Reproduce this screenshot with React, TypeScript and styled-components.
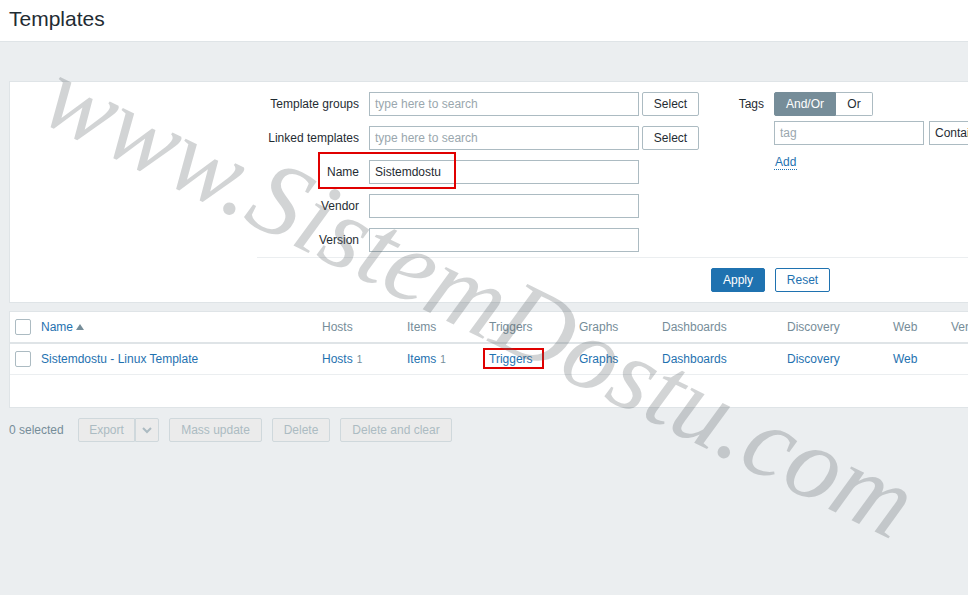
import React from "react";
import styled, { createGlobalStyle } from "styled-components";

const Global = createGlobalStyle`
  html, body { margin: 0; padding: 0; background: #ebeef0; }
  body { font: 12px/14px "Liberation Sans", Arial, sans-serif; color: #1f2c33; }
  #root { width: 968px; height: 595px; overflow: hidden; }
  * { box-sizing: border-box; }
`;

const Page = styled.div`
  position: relative;
  width: 968px;
  height: 595px;
  overflow: hidden;
  background: #ebeef0;
`;
const Header = styled.header`
  height: 42px;
  background: #fff;
  border-bottom: 1px solid #dfe4e7;
  padding: 7px 0 0 9px;
`;
const Title = styled.h1`
  margin: 0;
  font-size: 21px;
  line-height: 24px;
  font-weight: 400;
  color: #1f2c33;
`;
const Content = styled.main`
  padding: 39px 0 0 9px;
  width: 1200px;
`;
const FilterPanel = styled.section`
  height: 222px;
  background: #fff;
  border: 1px solid #dfe4e7;
  border-right: 0;
  padding-top: 10px;
`;
const FilterColumns = styled.div`
  display: flex;
  height: 165px;
`;
const LeftColumn = styled.div`
  display: flex;
  flex-direction: column;
  gap: 10px;
  width: 720px;
`;
const TagsColumn = styled.div`
  display: grid;
  grid-template-columns: 34px auto;
  column-gap: 10px;
  align-content: start;
  height: 100%;
`;
const FieldRow = styled.div`
  position: relative;
  display: flex;
  align-items: center;
  height: 24px;
`;
const Label = styled.label`
  width: 359px;
  padding-right: 10px;
  text-align: right;
  color: #1f2c33;
`;
const TextInput = styled.div<{ $placeholder?: boolean }>`
  width: 270px;
  height: 24px;
  line-height: 22px;
  padding: 0 5px;
  background: #fff;
  border: 1px solid #acbbc2;
  color: ${(p) => (p.$placeholder ? "#9aa7ae" : "#1f2c33")};
`;
const SelectButton = styled.button`
  width: 57px;
  height: 24px;
  margin-left: 3px;
  padding: 0;
  font: inherit;
  color: #1f2c33;
  background: #fff;
  border: 1px solid #acbbc2;
  border-radius: 2px;
`;
const TagsLabel = styled.div`
  padding-top: 5px;
  height: 24px;
  text-align: right;
  color: #1f2c33;
`;
const Segmented = styled.div`
  display: flex;
  width: 99px;
  height: 24px;
`;
const Segment = styled.div<{ $active?: boolean }>`
  display: flex;
  align-items: center;
  justify-content: center;
  height: 24px;
  flex: ${(p) => (p.$active ? "0 0 62px" : "1")};
  color: ${(p) => (p.$active ? "#fff" : "#1f2c33")};
  background: ${(p) => (p.$active ? "#768d99" : "#fff")};
  border: 1px solid ${(p) => (p.$active ? "#768d99" : "#acbbc2")};
  border-left-width: ${(p) => (p.$active ? "1px" : "0")};
  border-radius: ${(p) => (p.$active ? "2px 0 0 2px" : "0 2px 2px 0")};
`;
const TagRow = styled.div`
  grid-column: 2;
  display: flex;
  gap: 5px;
  margin-top: 5px;
  width: 300px;
`;
const TagInput = styled.div`
  width: 150px;
  height: 24px;
  line-height: 22px;
  padding: 0 5px;
  border: 1px solid #acbbc2;
  color: #9aa7ae;
`;
const OperatorSelect = styled.div`
  width: 100px;
  height: 24px;
  line-height: 22px;
  padding: 0 5px;
  border: 1px solid #acbbc2;
  color: #1f2c33;
`;
const AddLink = styled.a`
  grid-column: 2;
  justify-self: start;
  margin-top: 10px;
  padding: 0 1px;
  color: #1f72b0;
  border-bottom: 1px dotted #1f72b0;
`;
const FilterActions = styled.div`
  display: flex;
  gap: 10px;
  margin-left: 247px;
  padding: 10px 0 0 454px;
  height: 46px;
  border-top: 1px solid #ebeef0;
`;
const ApplyButton = styled.button`
  width: 54px;
  height: 24px;
  padding: 0;
  font: inherit;
  color: #fff;
  background: #1f72b0;
  border: 1px solid #1f72b0;
  border-radius: 2px;
`;
const ResetButton = styled.button`
  width: 55px;
  height: 24px;
  padding: 0;
  font: inherit;
  color: #1f72b0;
  background: #fff;
  border: 1px solid #1f72b0;
  border-radius: 2px;
`;
const Table = styled.section`
  height: 97px;
  margin-top: 8px;
  background: #fff;
  border: 1px solid #dfe4e7;
  border-right: 0;
`;
const COLUMNS = "26px 281px 85px 82px 90px 83px 125px 106px 58px 100px";
const HeadRow = styled.div`
  display: grid;
  grid-template-columns: ${COLUMNS};
  align-items: center;
  height: 32px;
  padding-left: 5px;
  border-bottom: 2px solid #dfe4e7;
  color: #768d99;
`;
const BodyRow = styled.div`
  display: grid;
  grid-template-columns: ${COLUMNS};
  align-items: center;
  height: 31px;
  padding-left: 5px;
  border-bottom: 1px solid #ebeef0;
`;
const Check = styled.span`
  display: block;
  width: 16px;
  height: 16px;
  background: #fff;
  border: 1px solid #acbbc2;
  border-radius: 2px;
`;
const SortLink = styled.a`
  display: inline-flex;
  align-items: center;
  gap: 3px;
  color: #1f72b0;
`;
const Arrow = styled.svg`
  width: 8px;
  height: 6px;
  fill: #768d99;
`;
const CellLink = styled.a`
  color: #1f72b0;
`;
const Count = styled.span`
  font-size: 10px;
  line-height: 10px;
  margin-left: 4px;
  color: #768d99;
`;
const Cell = styled.div`
  position: relative;
`;
const Actions = styled.div`
  display: flex;
  align-items: center;
  height: 24px;
  margin-top: 10px;
  color: #768d99;
`;
const SelectedCount = styled.span`
  width: 69px;
`;
const DisabledButton = styled.button<{ $w: number }>`
  width: ${(p) => p.$w}px;
  height: 24px;
  margin-right: 10px;
  padding: 0;
  font: inherit;
  color: #acbbc2;
  background: #ebebeb;
  border: 1px solid #cfd8dc;
  border-radius: 2px;
`;
const SplitLeft = styled(DisabledButton)`
  margin-right: 0;
  border-radius: 2px 0 0 2px;
`;
const SplitRight = styled(DisabledButton)`
  display: flex;
  align-items: center;
  justify-content: center;
  border-left: 1px solid #cfd8dc;
  border-radius: 0 2px 2px 0;
`;
const Highlight = styled.span<{ $l: number; $t: number; $w: number; $h: number }>`
  position: absolute;
  left: ${(p) => p.$l}px;
  top: ${(p) => p.$t}px;
  width: ${(p) => p.$w}px;
  height: ${(p) => p.$h}px;
  border: 2px solid #e00000;
  pointer-events: none;
`;
const Watermark = styled.div`
  position: absolute;
  left: 75px;
  top: 40px;
  font: italic 400 105px/1 "Liberation Serif", serif;
  white-space: nowrap;
  color: rgba(90, 95, 98, 0.27);
  transform: rotate(26.2deg);
  transform-origin: 0 0;
  pointer-events: none;
`;

export default function App() {
  return (
    <Page>
      <Global />
      <Header>
        <Title>Templates</Title>
      </Header>
      <Content>
        <FilterPanel>
          <FilterColumns>
            <LeftColumn>
              <FieldRow>
                <Label>Template groups</Label>
                <TextInput $placeholder>type here to search</TextInput>
                <SelectButton>Select</SelectButton>
              </FieldRow>
              <FieldRow>
                <Label>Linked templates</Label>
                <TextInput $placeholder>type here to search</TextInput>
                <SelectButton>Select</SelectButton>
              </FieldRow>
              <FieldRow>
                <Label>Name</Label>
                <TextInput>Sistemdostu</TextInput>
                <Highlight $l={308} $t={-8} $w={138} $h={37} />
              </FieldRow>
              <FieldRow>
                <Label>Vendor</Label>
                <TextInput />
              </FieldRow>
              <FieldRow>
                <Label>Version</Label>
                <TextInput />
              </FieldRow>
            </LeftColumn>
            <TagsColumn>
              <TagsLabel>Tags</TagsLabel>
              <Segmented>
                <Segment $active>And/Or</Segment>
                <Segment>Or</Segment>
              </Segmented>
              <TagRow>
                <TagInput>tag</TagInput>
                <OperatorSelect>Contains</OperatorSelect>
              </TagRow>
              <AddLink>Add</AddLink>
            </TagsColumn>
          </FilterColumns>
          <FilterActions>
            <ApplyButton>Apply</ApplyButton>
            <ResetButton>Reset</ResetButton>
          </FilterActions>
        </FilterPanel>
        <Table>
          <HeadRow>
            <Check />
            <div>
              <SortLink>
                Name
                <Arrow viewBox="0 0 8 6">
                  <path d="M4 0l4 6H0z" />
                </Arrow>
              </SortLink>
            </div>
            <div>Hosts</div>
            <div>Items</div>
            <div>Triggers</div>
            <div>Graphs</div>
            <div>Dashboards</div>
            <div>Discovery</div>
            <div>Web</div>
            <div>Version</div>
          </HeadRow>
          <BodyRow>
            <Check />
            <CellLink>Sistemdostu - Linux Template</CellLink>
            <div>
              <CellLink>Hosts</CellLink>
              <Count>1</Count>
            </div>
            <div>
              <CellLink>Items</CellLink>
              <Count>1</Count>
            </div>
            <Cell>
              <CellLink>Triggers</CellLink>
              <Highlight $l={-6} $t={-4} $w={61} $h={21} />
            </Cell>
            <CellLink>Graphs</CellLink>
            <CellLink>Dashboards</CellLink>
            <CellLink>Discovery</CellLink>
            <CellLink>Web</CellLink>
            <div />
          </BodyRow>
        </Table>
        <Actions>
          <SelectedCount>0 selected</SelectedCount>
          <SplitLeft $w={57}>Export</SplitLeft>
          <SplitRight $w={24}>
            <svg width="12" height="12" viewBox="0 0 12 12" fill="none" stroke="#acbbc2" strokeWidth="2">
              <path d="M2 4l4 4 4-4" />
            </svg>
          </SplitRight>
          <DisabledButton $w={93}>Mass update</DisabledButton>
          <DisabledButton $w={58}>Delete</DisabledButton>
          <DisabledButton $w={112}>Delete and clear</DisabledButton>
        </Actions>
      </Content>
      <Watermark>www.SistemDostu.com</Watermark>
    </Page>
  );
}
